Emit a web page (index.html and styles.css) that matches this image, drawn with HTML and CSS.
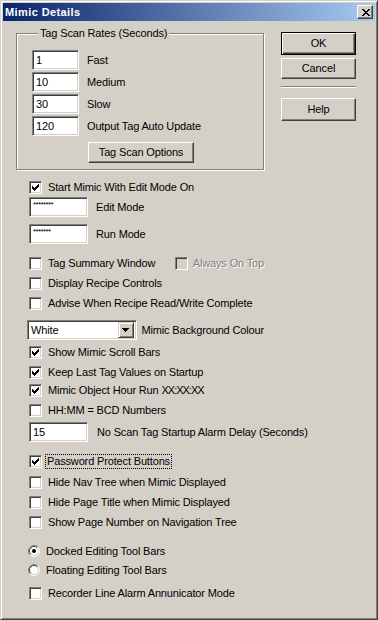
FILE: index.html
```html
<!DOCTYPE html>
<html lang="en">
<head>
    <meta charset="UTF-8">
    <title>Mimic Details</title>
    <link rel="stylesheet" href="styles.css">
</head>
<body>
    <div class="window">
        <!-- Title bar -->
        <div class="titlebar">
            <span class="title">Mimic Details</span>
            <span class="close">
                <svg width="8" height="7" viewBox="0 0 8 7"><path d="M0 0h2v1H0zM6 0h2v1H6zM1 1h2v1H1zM5 1h2v1H5zM2 2h4v1H2zM3 3h2v1H3zM2 4h4v1H2zM1 5h2v1H1zM5 5h2v1H5zM0 6h2v1H0zM6 6h2v1H6z" fill="#000"/></svg>
            </span>
        </div>

        <div class="content">
            <div class="main">
                <fieldset class="group">
                    <legend>Tag Scan Rates (Seconds)</legend>
                    <div class="rate"><span class="field rate-field">1</span><span>Fast</span></div>
                    <div class="rate"><span class="field rate-field">10</span><span>Medium</span></div>
                    <div class="rate"><span class="field rate-field">30</span><span>Slow</span></div>
                    <div class="rate"><span class="field rate-field">120</span><span>Output Tag Auto Update</span></div>
                    <div class="btn scan-btn">Tag Scan Options</div>
                </fieldset>

                <div class="options">
                    <div class="check"><span class="box on"></span><span>Start Mimic With Edit Mode On</span></div>
                    <div class="line mt3"><span class="field pw-field"><span class="stars">********</span></span><span>Edit Mode</span></div>
                    <div class="line"><span class="field pw-field"><span class="stars">*******</span></span><span>Run Mode</span></div>
                    <div class="check mt13">
                        <span class="box"></span><span class="summary">Tag Summary Window</span>
                        <span class="box disabled"></span><span class="dim">Always On Top</span>
                    </div>
                    <div class="check"><span class="box"></span><span>Display Recipe Controls</span></div>
                    <div class="check"><span class="box"></span><span>Advise When Recipe Read/Write Complete</span></div>
                    <div class="line combo-line mt10">
                        <span class="combo"><span class="combo-text">White</span><span class="combo-btn"><svg width="7" height="4" viewBox="0 0 7 4"><path d="M0 0h7v1H0zM1 1h5v1H1zM2 2h3v1H2zM3 3h1v1H3z" fill="#000"/></svg></span></span>
                        <span>Mimic Background Colour</span>
                    </div>
                    <div class="check mt6"><span class="box on"></span><span>Show Mimic Scroll Bars</span></div>
                    <div class="check"><span class="box on"></span><span>Keep Last Tag Values on Startup</span></div>
                    <div class="check mt5"><span class="box on"></span><span>Mimic Object Hour Run <span class="xx">XX:XX:XX</span></span></div>
                    <div class="check"><span class="box"></span><span>HH:MM = BCD Numbers</span></div>
                    <div class="line mt5"><span class="field pw-field num">15</span><span class="delay">No Scan Tag Startup Alarm Delay (Seconds)</span></div>
                    <div class="check mt13"><span class="box on"></span><span class="focus">Password Protect Buttons</span></div>
                    <div class="check mt8"><span class="box"></span><span>Hide Nav Tree when Mimic Displayed</span></div>
                    <div class="check"><span class="box"></span><span>Hide Page Title when Mimic Displayed</span></div>
                    <div class="check"><span class="box"></span><span>Show Page Number on Navigation Tree</span></div>
                    <div class="radio mt16">
                        <svg class="dot" width="12" height="12" viewBox="0 0 12 12">
                            <circle cx="6" cy="6" r="5" fill="#fff"/>
                            <path d="M2.11 9.89A5.5 5.5 0 0 1 9.89 2.11" fill="none" stroke="#808080"/>
                            <path d="M9.89 2.11A5.5 5.5 0 0 1 2.11 9.89" fill="none" stroke="#fff"/>
                            <path d="M2.82 9.18A4.5 4.5 0 0 1 9.18 2.82" fill="none" stroke="#404040"/>
                            <path d="M9.18 2.82A4.5 4.5 0 0 1 2.82 9.18" fill="none" stroke="#d4d0c8"/>
                            <circle cx="6" cy="6" r="2" fill="#000"/>
                        </svg>
                        <span>Docked Editing Tool Bars</span>
                    </div>
                    <div class="radio">
                        <svg class="dot" width="12" height="12" viewBox="0 0 12 12">
                            <circle cx="6" cy="6" r="5" fill="#fff"/>
                            <path d="M2.11 9.89A5.5 5.5 0 0 1 9.89 2.11" fill="none" stroke="#808080"/>
                            <path d="M9.89 2.11A5.5 5.5 0 0 1 2.11 9.89" fill="none" stroke="#fff"/>
                            <path d="M2.82 9.18A4.5 4.5 0 0 1 9.18 2.82" fill="none" stroke="#404040"/>
                            <path d="M9.18 2.82A4.5 4.5 0 0 1 2.82 9.18" fill="none" stroke="#d4d0c8"/>
                        </svg>
                        <span>Floating Editing Tool Bars</span>
                    </div>
                    <div class="check mt11"><span class="box"></span><span>Recorder Line Alarm Annunicator Mode</span></div>
                </div>
            </div>

            <!-- Dialog buttons -->
            <div class="side">
                <div class="btn default">OK</div>
                <div class="btn cancel">Cancel</div>
                <div class="sep"></div>
                <div class="btn">Help</div>
            </div>
        </div>
    </div>
</body>
</html>
```

FILE: styles.css
```css
/* Page */
body {
    margin: 0;
    background: #d4d0c8;
    font-family: 'Liberation Sans', Arial, sans-serif;
    font-size: 11px;
    line-height: 13px;
    letter-spacing: -0.15px;
    color: #000;
}

/* Window frame */
.window {
    width: 378px;
    height: 620px;
    box-sizing: border-box;
    padding: 2px;
    background: #d4d0c8;
    border: 1px solid;
    border-color: #d4d0c8 #404040 #404040 #d4d0c8;
    box-shadow: inset 1px 1px #fff, inset -1px -1px #808080;
}

.titlebar {
    height: 18px;
    display: flex;
    align-items: center;
    justify-content: space-between;
    padding: 0 2px;
    background: linear-gradient(to right, #0a246a, #a6caf0);
}

.title {
    color: #fff;
    font-weight: bold;
    letter-spacing: 0.4px;
}

.close {
    width: 16px;
    height: 14px;
    box-sizing: border-box;
    display: flex;
    align-items: center;
    justify-content: center;
    padding-left: 1px;
    background: #d4d0c8;
    border: 1px solid;
    border-color: #fff #404040 #404040 #fff;
    box-shadow: inset -1px -1px #808080;
}

.close svg, .combo-btn svg {
    display: block;
}

.content {
    display: flex;
    padding: 6px 0 0 13px;
}

.main {
    width: 248px;
}

/* Group box */
.group {
    margin: 0;
    padding: 10px 0 6px 15px;
    min-inline-size: 0;
    border: 1px solid #808080;
    box-shadow: inset 1px 1px #fff, 1px 1px #fff;
}

.group legend {
    margin-left: 6px;
    padding: 0 2px;
    background: #d4d0c8;
}

.rate {
    display: flex;
    align-items: center;
    gap: 8px;
    height: 20px;
    margin-bottom: 2px;
}

/* Sunken edit field */
.field {
    display: block;
    box-sizing: border-box;
    height: 20px;
    padding: 3px 0 0 3px;
    background: #fff;
    border: 1px solid;
    border-color: #808080 #fff #fff #808080;
    box-shadow: inset 1px 1px #404040, inset -1px -1px #d4d0c8;
    flex: none;
}

.rate-field {
    width: 47px;
}

.pw-field {
    width: 59px;
}

.stars {
    display: block;
    font-size: 8px;
    line-height: 8px;
    letter-spacing: -0.6px;
}

/* Buttons */
.btn {
    box-sizing: border-box;
    width: 75px;
    height: 23px;
    display: flex;
    align-items: center;
    justify-content: center;
    background: #d4d0c8;
    border: 1px solid;
    border-color: #fff #404040 #404040 #fff;
    box-shadow: inset -1px -1px #808080;
}

.btn.default {
    border-color: #000;
    box-shadow: inset 1px 1px #fff, inset -1px -1px #404040, inset -2px -2px #808080;
}

.scan-btn {
    width: 106px;
    height: 21px;
    margin: 6px 0 0 56px;
}

.side {
    margin: 5px 0 0 17px;
    display: flex;
    flex-direction: column;
}

.btn.cancel {
    margin-top: 3px;
    height: 21px;
}

.sep {
    width: 75px;
    height: 0;
    margin: 7px 0 10px;
    border-top: 1px solid #808080;
    border-bottom: 1px solid #fff;
}

/* Options list */
.options {
    margin-top: 11px;
    padding-left: 13px;
    display: flex;
    flex-direction: column;
}

.options > * + * {
    margin-top: 7px;
}

.options > .mt3 { margin-top: 3px; }
.options > .mt5 { margin-top: 5px; }
.options > .mt6 { margin-top: 6px; }
.options > .mt8 { margin-top: 8px; }
.options > .mt10 { margin-top: 10px; }
.options > .mt11 { margin-top: 11px; }
.options > .mt13 { margin-top: 13px; }
.options > .mt16 { margin-top: 16px; }

.check {
    display: flex;
    align-items: flex-start;
    gap: 6px;
    height: 13px;
    white-space: nowrap;
}

.line {
    display: flex;
    align-items: center;
    gap: 8px;
    height: 20px;
    white-space: nowrap;
}

.num {
    padding-top: 3px;
}

.delay {
    margin-left: 1px;
}

/* Checkbox */
.box {
    width: 13px;
    height: 13px;
    box-sizing: border-box;
    flex: none;
    background: #fff;
    border: 1px solid;
    border-color: #808080 #fff #fff #808080;
    box-shadow: inset 1px 1px #404040, inset -1px -1px #d4d0c8;
}

.box.on {
    background: #fff url("data:image/svg+xml,%3Csvg xmlns='http://www.w3.org/2000/svg' width='7' height='7'%3E%3Cpath d='M6 0h1v1H6zM5 1h2v1H5zM0 2h1v1H0zM4 2h3v1H4zM0 3h2v1H0zM3 3h3v1H3zM0 4h5v1H0zM1 5h3v1H1zM2 6h1v1H2z'/%3E%3C/svg%3E") no-repeat 2px 2px;
}

.box.disabled {
    background: #d4d0c8;
}

.summary {
    width: 123px;
}

.dim {
    color: #808080;
    text-shadow: 1px 1px #fff;
    margin-left: -1px;
}

.xx {
    letter-spacing: -1px;
}

.focus {
    margin-left: -2px;
    padding: 0 1px;
    outline: 1px dotted #000;
}

/* Combo box */
.combo-line {
    margin-left: -2px;
    gap: 5px;
}

.combo {
    box-sizing: border-box;
    width: 142px;
    height: 20px;
    display: flex;
    justify-content: space-between;
    align-items: center;
    padding: 2px;
    background: #fff;
    border: 1px solid;
    border-color: #808080 #fff #fff #808080;
    box-shadow: inset 1px 1px #404040, inset -1px -1px #d4d0c8;
}

.combo-text {
    padding-left: 1px;
}

.combo-btn {
    box-sizing: border-box;
    width: 16px;
    height: 16px;
    display: flex;
    align-items: center;
    justify-content: center;
    background: #d4d0c8;
    border: 1px solid;
    border-color: #d4d0c8 #404040 #404040 #d4d0c8;
    box-shadow: inset 1px 1px #fff, inset -1px -1px #808080;
}

/* Radio buttons */
.radio {
    display: flex;
    align-items: flex-start;
    gap: 6px;
    height: 12px;
    margin-left: -1px;
    white-space: nowrap;
}

.dot {
    flex: none;
    display: block;
}
```
